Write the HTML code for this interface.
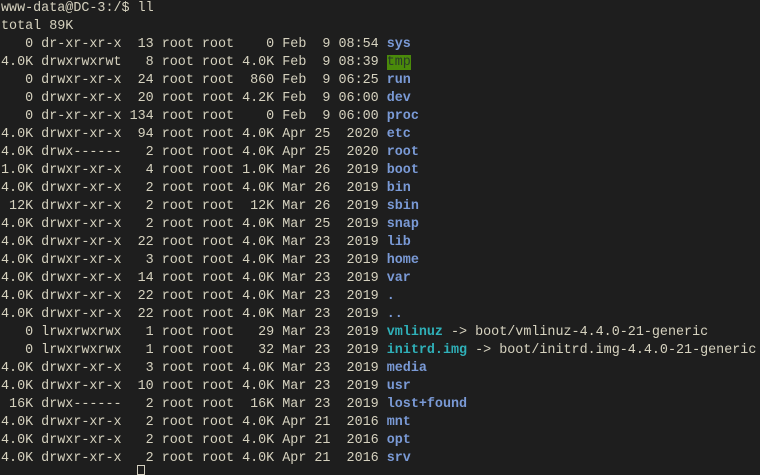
<!DOCTYPE html><html><head><style>
html,body{margin:0;padding:0;background:#1e1e1e;width:760px;height:468px;overflow:hidden}
pre{margin:0;padding:0 0 0 1px;font-family:"Liberation Mono",monospace;font-size:13.4px;line-height:18px;color:#d6d2bf;white-space:pre;position:relative;top:0px}
.d{color:#7a9ad6;font-weight:bold}
.l{color:#2fb0b8;font-weight:bold}
.t{background:#4a8a0a;color:#2a3a2a}
.c{position:absolute;left:137px;top:465px;width:8px;height:10px;border:1px solid #d4d0c0;box-sizing:border-box}
</style></head><body><pre>www-data@DC-3:/$ ll
total 89K
   0 dr-xr-xr-x  13 root root    0 Feb  9 08:54 <span class="d">sys</span>
4.0K drwxrwxrwt   8 root root 4.0K Feb  9 08:39 <span class="t">tmp</span>
   0 drwxr-xr-x  24 root root  860 Feb  9 06:25 <span class="d">run</span>
   0 drwxr-xr-x  20 root root 4.2K Feb  9 06:00 <span class="d">dev</span>
   0 dr-xr-xr-x 134 root root    0 Feb  9 06:00 <span class="d">proc</span>
4.0K drwxr-xr-x  94 root root 4.0K Apr 25  2020 <span class="d">etc</span>
4.0K drwx------   2 root root 4.0K Apr 25  2020 <span class="d">root</span>
1.0K drwxr-xr-x   4 root root 1.0K Mar 26  2019 <span class="d">boot</span>
4.0K drwxr-xr-x   2 root root 4.0K Mar 26  2019 <span class="d">bin</span>
 12K drwxr-xr-x   2 root root  12K Mar 26  2019 <span class="d">sbin</span>
4.0K drwxr-xr-x   2 root root 4.0K Mar 25  2019 <span class="d">snap</span>
4.0K drwxr-xr-x  22 root root 4.0K Mar 23  2019 <span class="d">lib</span>
4.0K drwxr-xr-x   3 root root 4.0K Mar 23  2019 <span class="d">home</span>
4.0K drwxr-xr-x  14 root root 4.0K Mar 23  2019 <span class="d">var</span>
4.0K drwxr-xr-x  22 root root 4.0K Mar 23  2019 <span class="d">.</span>
4.0K drwxr-xr-x  22 root root 4.0K Mar 23  2019 <span class="d">..</span>
   0 lrwxrwxrwx   1 root root   29 Mar 23  2019 <span class="l">vmlinuz</span> -&gt; boot/vmlinuz-4.4.0-21-generic
   0 lrwxrwxrwx   1 root root   32 Mar 23  2019 <span class="l">initrd.img</span> -&gt; boot/initrd.img-4.4.0-21-generic
4.0K drwxr-xr-x   3 root root 4.0K Mar 23  2019 <span class="d">media</span>
4.0K drwxr-xr-x  10 root root 4.0K Mar 23  2019 <span class="d">usr</span>
 16K drwx------   2 root root  16K Mar 23  2019 <span class="d">lost+found</span>
4.0K drwxr-xr-x   2 root root 4.0K Apr 21  2016 <span class="d">mnt</span>
4.0K drwxr-xr-x   2 root root 4.0K Apr 21  2016 <span class="d">opt</span>
4.0K drwxr-xr-x   2 root root 4.0K Apr 21  2016 <span class="d">srv</span></pre><div class="c"></div></body></html>
